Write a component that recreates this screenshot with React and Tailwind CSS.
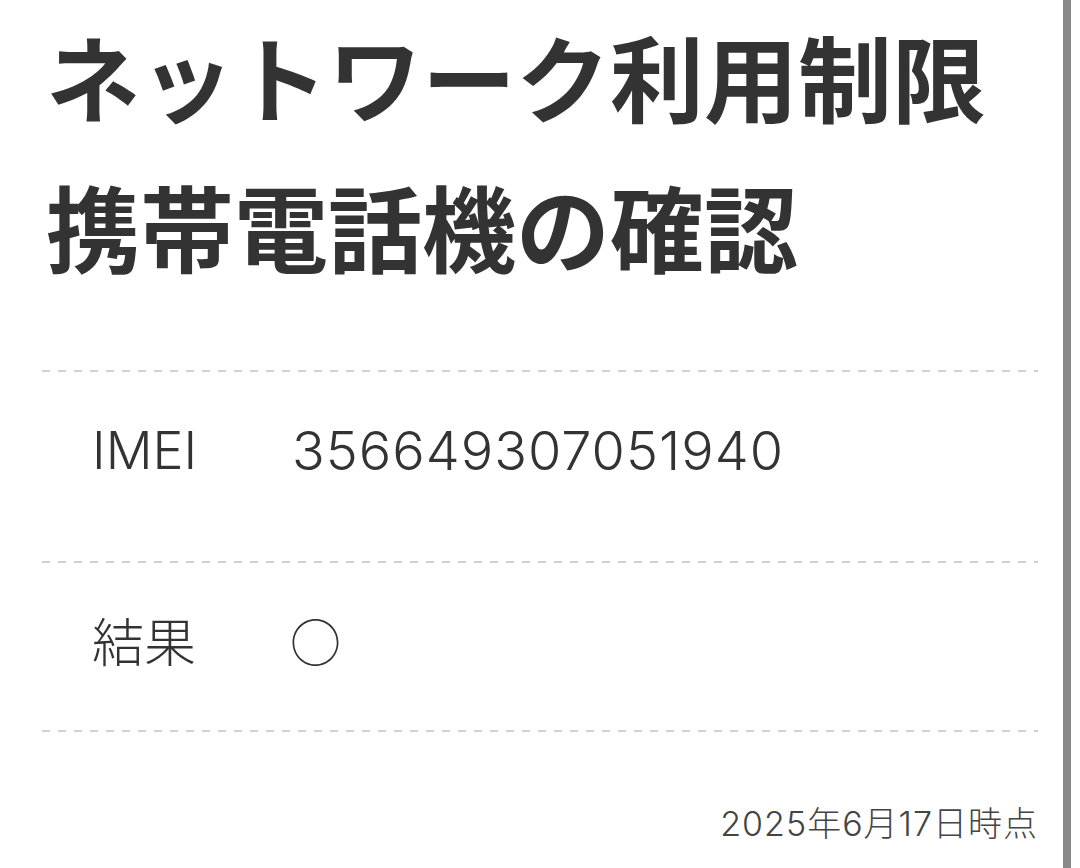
const font = {
  fontFamily: 'Inter, "Noto Sans CJK JP", sans-serif',
};

function Dashed() {
  return (
    <div className="h-[2px] w-full bg-[repeating-linear-gradient(to_right,#d0d0d0_0_8px,transparent_8px_16px)]" />
  );
}

function Row({ label, children, extra }) {
  return (
    <div className={`flex items-center pl-[50px] text-[52px] leading-[60px] font-light text-[#333] ${extra}`}>
      <div className="w-[200px]">{label}</div>
      {children}
    </div>
  );
}

export default function App() {
  return (
    <div className="flex h-[868px] w-[1080px] bg-white" style={font}>
      <div className="flex-1 pl-[42px] pr-[25px]">
        <h1
          className="pl-[4px] text-[94px] leading-[150px] font-bold text-[#333]"
          style={{ fontFamily: '"Noto Sans CJK JP", sans-serif' }}
        >
          ネットワーク利用制限
          <br />
          携帯電話機の確認
        </h1>
        <div className="mt-[70px]">
          <Dashed />
          <Row label="IMEI" extra="pt-[49px] pb-[80px]">
            <div className="text-[54px] tracking-[1px]">356649307051940</div>
          </Row>
          <Dashed />
          <Row label="結果" extra="pt-[51px] pb-[56px]">
            <div
              className="-mt-[8px] -ml-[2px] text-[51px] leading-[60px] font-extralight"
              style={{ fontFamily: '"Noto Sans CJK JP", sans-serif' }}
            >
              ○
            </div>
          </Row>
          <Dashed />
        </div>
        <p className="mt-[72px] text-right text-[34px] leading-[40px] tracking-[1px] font-light text-[#444]">
          2025年6月17日時点
        </p>
      </div>
      <div className="w-[8px] bg-[#8a8a8a]" />
      <div className="w-[9px]" />
    </div>
  );
}
